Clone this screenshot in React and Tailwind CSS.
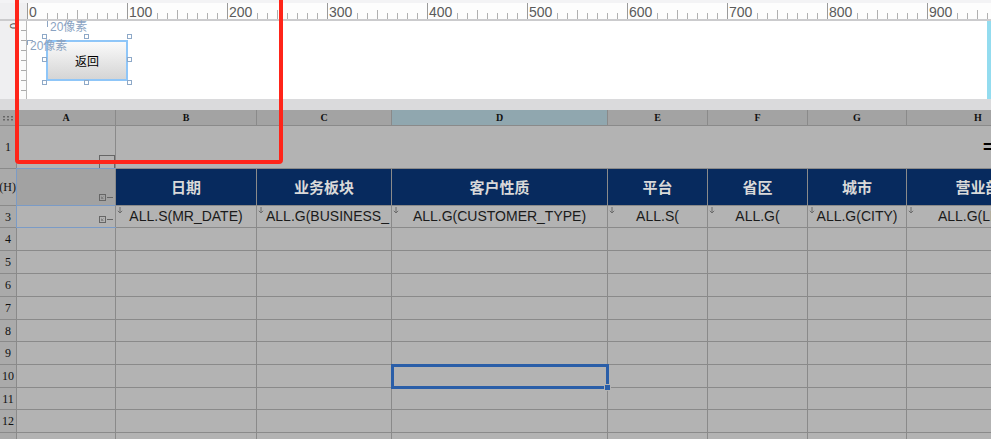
import React from "react";

const cols = [
  { key: "A", w: "w-[99px]" },
  { key: "B", w: "w-[141px]" },
  { key: "C", w: "w-[135px]" },
  { key: "D", w: "w-[216px]" },
  { key: "E", w: "w-[100px]" },
  { key: "F", w: "w-[100px]" },
  { key: "G", w: "w-[99px]" },
  { key: "H", w: "w-[143px]" },
];

const heads = ["日期", "业务板块", "客户性质", "平台", "省区", "城市", "营业部"];

// row 3 formulas, align: c = centered, l = left (overflowing)
const formulas = [
  { t: "ALL.S(MR_DATE)", a: "c" },
  { t: "ALL.G(BUSINESS_", a: "l" },
  { t: "ALL.G(CUSTOMER_TYPE)", a: "c" },
  { t: "ALL.S(", a: "c" },
  { t: "ALL.G(", a: "c" },
  { t: "ALL.G(CITY)", a: "c" },
  { t: "ALL.G(LINE)", a: "c" },
];

const bodyRows = [
  { n: 4, h: "h-[23px]" },
  { n: 5, h: "h-[23px]" },
  { n: 6, h: "h-[23px]" },
  { n: 7, h: "h-[23px]" },
  { n: 8, h: "h-[22px]" },
  { n: 9, h: "h-[23px]" },
  { n: 10, h: "h-[23px]" },
  { n: 11, h: "h-[22px]" },
  { n: 12, h: "h-[23px]" },
  { n: 13, h: "h-[23px]" },
];

const rulerLabels = [
  { v: 0, pos: "left-[2px]" },
  { v: 100, pos: "left-[102px]" },
  { v: 200, pos: "left-[202px]" },
  { v: 300, pos: "left-[302px]" },
  { v: 400, pos: "left-[402px]" },
  { v: 500, pos: "left-[502px]" },
  { v: 600, pos: "left-[602px]" },
  { v: 700, pos: "left-[702px]" },
  { v: 800, pos: "left-[802px]" },
  { v: 900, pos: "left-[902px]" },
];

const TopRuler = () => {
  const ticks = [];
  for (let x = 0; x <= 960; x += 10) {
    const r = x % 100;
    const major = r === 0;
    const mid = x % 50 === 0;
    // labels sit over the first ticks after a major one
    if (!major && (x < 100 ? r <= 10 : r <= 20)) continue;
    ticks.push(
      <line
        key={x}
        x1={x + 0.5}
        x2={x + 0.5}
        y1={major ? 0 : mid ? 7 : 10}
        y2={16}
        stroke={major ? "#9a9a9a" : "#b0b0b0"}
        strokeWidth="1"
      />
    );
  }
  return (
    <div className="relative h-[16px]">
      <svg width="964" height="16" className="block">
        {ticks}
      </svg>
      {rulerLabels.map((l) => (
        <span
          key={l.v}
          className={`absolute top-[2px] ${l.pos} text-[14px] leading-[14px] text-[#5a5a5a]`}
        >
          {l.v}
        </span>
      ))}
    </div>
  );
};

const LeftRuler = () => (
  <svg width="26" height="78" className="block">
    <rect x="0" y="0" width="26" height="78" fill="#efeff1" />
    <rect x="19" y="0" width="7" height="78" fill="#fbfbfb" />
    {[9, 19, 29, 39, 49, 59, 69].map((y) => (
      <line key={y} x1="21" x2="26" y1={y + 0.5} y2={y + 0.5} stroke="#aaaaaa" />
    ))}
    <text x="0" y="0" fontSize="11" fill="#555" fontFamily="Liberation Sans, sans-serif" transform="translate(18 8) rotate(-90)">
      0
    </text>
  </svg>
);

const Handle = ({ pos }) => (
  <div className={`absolute w-[5px] h-[5px] border border-[#8ea9c8] bg-white ${pos}`} />
);

const CheckIcon = () => (
  <svg width="15" height="7" className="block">
    <rect x="0.5" y="0.5" width="6" height="6" fill="none" stroke="#666" />
    <path d="M2.5 4.5 L4.5 2.5 M2.5 2.5 V4.5 H4.5" stroke="#777" strokeWidth="0.8" fill="none" />
    <line x1="8" x2="14" y1="3.5" y2="3.5" stroke="#666" />
  </svg>
);

const DownArrow = () => (
  <svg width="6" height="7" className="block">
    <path d="M3 0 V6 M0.8 3.8 L3 6 L5.2 3.8" stroke="#6b6b6b" strokeWidth="1" fill="none" />
  </svg>
);

const Dots = () => (
  <svg width="12" height="6" className="block">
    {[1, 5, 9].map((x) =>
      [1, 4].map((y) => <rect key={x + "-" + y} x={x} y={y} width="2" height="1.5" fill="#666" />)
    )}
  </svg>
);

const rowHead = "w-[17px] shrink-0 border-r border-b border-[#8a8a8a] bg-[#aaaaaa] flex items-center justify-center font-['Liberation_Serif',serif] text-[12px] text-[#111]";

export default function App() {
  return (
    <div className="relative w-[991px] h-[439px] overflow-hidden bg-[#b3b3b3] font-['Liberation_Sans','Noto_Sans_CJK_SC',sans-serif]">
      {/* designer area */}
      <div className="h-[99px] flex flex-col">
        <div className="h-[3px] bg-[#f3f3f5]" />
        <div className="flex h-[18px] border-b-2 border-[#cbcbcd]">
          <div className="w-[27px] shrink-0 bg-[#efeff1]" />
          <div className="flex-1 overflow-hidden bg-[#fdfdfd]">
            <TopRuler />
          </div>
        </div>
        <div className="flex flex-1">
          <div className="w-[27px] shrink-0 border-r border-[#b8b8b8]">
            <LeftRuler />
          </div>
          <div className="relative flex-1 bg-white">
            <div className="absolute left-[20px] top-0 w-px h-[6px] bg-[#8ea6c4]" />
            <div className="absolute left-[23px] top-[-1px] text-[12px] leading-[14px] text-[#8aa3c2]">
              20像素
            </div>
            <button className="absolute left-[19px] top-[19px] w-[82px] h-[41px] border-2 border-[#8fc6f8] bg-gradient-to-b from-[#fafafa] to-[#d5d5d5] text-[12px] text-black font-['Noto_Sans_CJK_SC',sans-serif] flex items-center justify-center">
              返回
            </button>
            <Handle pos="left-[15px] top-[13px]" />
            <Handle pos="left-[57px] top-[13px]" />
            <Handle pos="left-[100px] top-[13px]" />
            <Handle pos="left-[15px] top-[36px]" />
            <Handle pos="left-[100px] top-[36px]" />
            <Handle pos="left-[15px] top-[59px]" />
            <Handle pos="left-[57px] top-[59px]" />
            <Handle pos="left-[100px] top-[59px]" />
            <div className="absolute left-0 top-[19px] w-[6px] h-[5px] border-t border-l border-[#8ea6c4]" />
            <div className="absolute left-[3px] top-[18px] text-[12px] leading-[14px] text-[#8aa3c2]">
              20像素
            </div>
          </div>
          <div className="w-[4px] shrink-0 bg-[#93dcef]" />
        </div>
      </div>
      <div className="h-[11px] bg-[#dadadc]" />

      {/* sheet */}
      <div className="relative w-[1050px] flex flex-col">
        {/* column letters */}
        <div className="flex h-[16px]">
          <div className="w-[17px] shrink-0 border-r border-b border-[#8a8a8a] bg-[#a3a3a3] flex items-center justify-center">
            <Dots />
          </div>
          {cols.map((c) => (
            <div
              key={c.key}
              className={`${c.w} shrink-0 border-r border-b border-[#8a8a8a] ${c.key === "D" ? "bg-[#90a7af]" : "bg-[#a3a3a3]"} flex items-center justify-center font-['Liberation_Serif',serif] font-bold text-[10px] text-[#111]`}
            >
              {c.key}
            </div>
          ))}
        </div>

        {/* row 1 */}
        <div className="flex h-[43px]">
          <div className={rowHead}>1</div>
          <div className="w-[99px] shrink-0 border-r border-b border-[#8a8a8a] flex items-end justify-end">
            <div className="w-[16px] h-[13px] border-t border-l border-r border-[#666]" />
          </div>
          <div className="flex-1 border-b border-[#8a8a8a] flex items-center pl-[867px] text-[18px] font-bold text-black leading-none">
            =
          </div>
        </div>

        {/* row 2 header */}
        <div className="flex h-[37px]">
          <div className={`${rowHead} justify-end overflow-hidden whitespace-nowrap`}>2(H)</div>
          <div className="w-[99px] shrink-0 border-r border-b border-r-[#8a8a8a] border-b-[#7b9bc6] bg-[#a2a2a2] flex items-end justify-end pr-[1px] pb-[4px]">
            <CheckIcon />
          </div>
          {cols.slice(1).map((c, i) => (
            <div
              key={c.key}
              className={`${c.w} shrink-0 border-r border-b border-[#8a8a8a] bg-[#072a5e] flex items-center justify-center text-[15px] font-bold text-[#d9d9d9] font-['Noto_Sans_CJK_SC',sans-serif] whitespace-nowrap overflow-hidden`}
            >
              {heads[i]}
            </div>
          ))}
        </div>

        {/* row 3 formulas */}
        <div className="flex h-[22px]">
          <div className={rowHead}>3</div>
          <div className="w-[99px] shrink-0 border-r border-b border-[#8a8a8a] flex items-end justify-end pr-[1px] pb-[4px]">
            <CheckIcon />
          </div>
          {cols.slice(1).map((c, i) => (
            <div
              key={c.key}
              className={`${c.w} shrink-0 border-r border-b border-[#8a8a8a] flex items-start overflow-hidden`}
            >
              <div className="pt-[1px] pl-[1px] shrink-0">
                <DownArrow />
              </div>
              <div
                className={`flex-1 h-full flex items-center whitespace-nowrap text-[14px] text-[#1a1a1a] ${
                  formulas[i].a === "l" ? "justify-start pl-[2px]" : "justify-center pr-[7px]"
                }`}
              >
                {formulas[i].t}
              </div>
            </div>
          ))}
        </div>

        {/* empty rows */}
        {bodyRows.map((r) => (
          <div key={r.n} className={`flex ${r.h}`}>
            <div className={`${rowHead} ${r.n === 10 ? "bg-[#90a7af]" : ""}`}>{r.n}</div>
            {cols.map((c) => (
              <div key={c.key} className={`${c.w} shrink-0 border-r border-b border-[#8a8a8a]`} />
            ))}
          </div>
        ))}

        {/* A2:A3 outline */}
        <div className="absolute left-[16px] top-[58px] w-[100px] h-[60px] border-l border-t border-b border-[#7b9bc6] pointer-events-none" />

        {/* selected cell D10 */}
        <div className="absolute left-[391px] top-[254px] w-[218px] h-[25px] border-[3px] border-[#2a5ea8]">
          <div className="absolute right-[-5px] bottom-[-5px] w-[7px] h-[7px] bg-[#2a5ea8] border border-[#b3b3b3]" />
        </div>
      </div>

      {/* red highlight frame */}
      <div className="absolute left-[15px] top-[-8px] w-[268px] h-[172px] border-4 border-[#ff2419] rounded-[4px] pointer-events-none" />
    </div>
  );
}
